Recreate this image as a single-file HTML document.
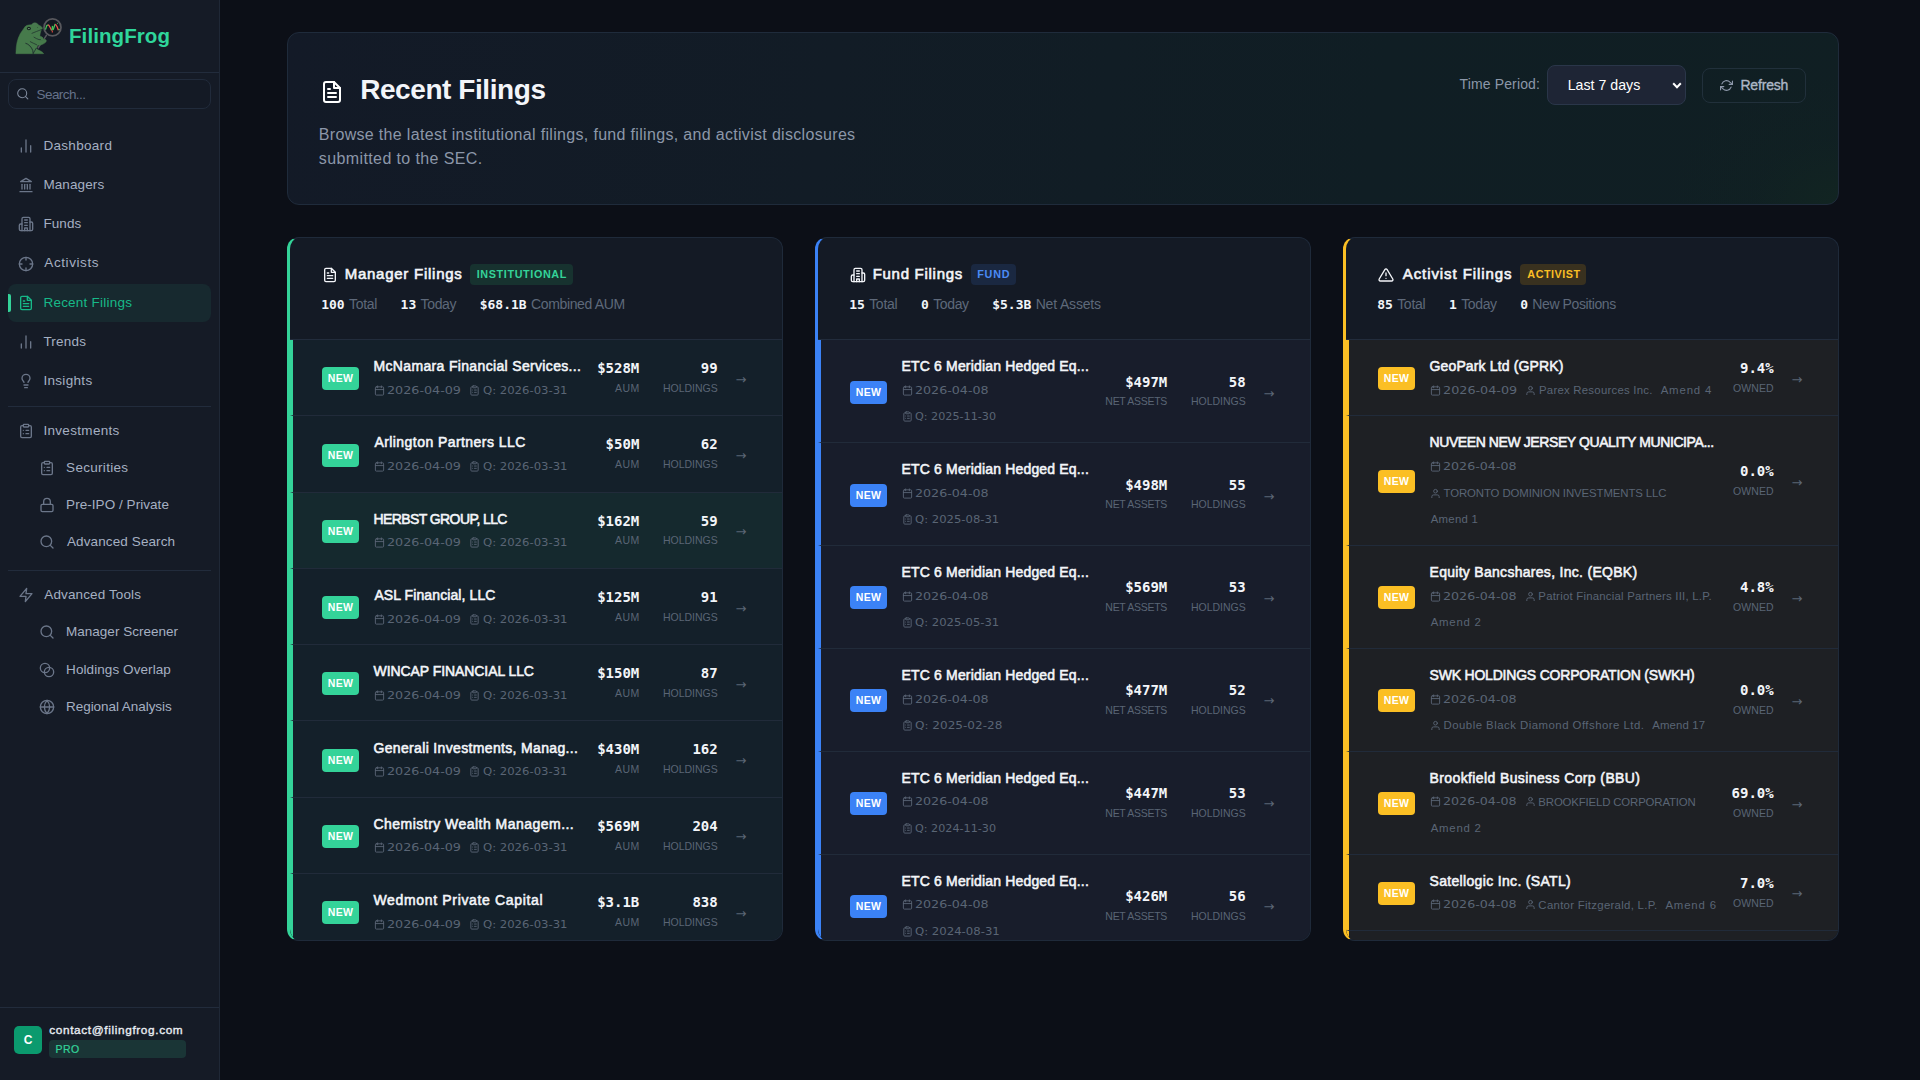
<!DOCTYPE html>
<html lang="en">
<head>
<meta charset="utf-8">
<title>Recent Filings - FilingFrog</title>
<style>
*{box-sizing:border-box;margin:0;padding:0}
html,body{width:1920px;height:1080px;overflow:hidden}
body{background:#0c0f17;color:#e5e9f0;font-family:"Liberation Sans",sans-serif;font-size:14px;position:relative}
svg{display:block;flex:none}
a{text-decoration:none;color:inherit}
i{font-style:normal}
span{white-space:nowrap}

/* ---------- sidebar ---------- */
.sb{position:absolute;left:0;top:0;width:220px;height:1080px;background:#151b26;border-right:1px solid #1f2836}
.logo{position:absolute;left:0;top:0;width:219px;height:73px;border-bottom:1px solid #222c3c}
.frog{position:absolute;left:12px;top:14px}
.brand{position:absolute;left:69px;top:24px;font-weight:700;font-size:20.5px;line-height:24px;color:#2fd69b}
.srch{position:absolute;left:8px;top:79px;width:203px;height:30px;border:1px solid #212b3b;border-radius:8px;background:#141a25;color:#66728a;display:flex;align-items:center;font-size:13.5px}
.srch svg{margin-left:6.9px;margin-right:7.2px;color:#7f8a9c}
.ni{position:absolute;left:8px;width:203px;height:38px;display:flex;align-items:center;padding:0 0 1.6px 9px;border-radius:8px;color:#a5b0c2;font-size:13.5px}
.ni i{width:18px;height:18px;display:flex;align-items:center;justify-content:center;color:#6b7689;margin-right:8.4px;position:relative;top:.8px}
.ni.act{background:#17292f;color:#17b988}
.ni.act i{color:#17b988}
.ni.act:before{content:"";position:absolute;left:0;top:9.8px;width:3px;height:18.4px;border-radius:0 2px 2px 0;background:#34d399}
.dv{position:absolute;left:8px;width:203px;height:1px;background:#222c3c}
.ni.grp,.ni.sub{height:36px}
.ni.sub{padding-left:30px}
.ni.sub i{margin-right:10.1px}
.usr{position:absolute;left:0;top:1007px;width:219px;height:73px;border-top:1px solid #222c3c}
.av{position:absolute;left:14px;top:18px;width:28px;height:28px;border-radius:5px;background:#0b9a6e;color:#fff;font-weight:700;font-size:12px;line-height:28px;text-align:center}
.em{position:absolute;left:49.3px;top:14.2px;font-size:11.8px;line-height:16px;color:#e9edf3;-webkit-text-stroke:.35px #e9edf3}
.pro{position:absolute;left:49px;top:32px;width:137px;height:18px;border-radius:4px;background:#1a3536;color:#34d399;font-size:10.5px;line-height:18px;padding-left:6.5px;-webkit-text-stroke:.2px #34d399}

/* ---------- main ---------- */
.mn{position:absolute;left:287px;top:32px;width:1552px}
.hero{position:relative;height:173px;border:1px solid #1f2b3b;border-radius:12px;background:radial-gradient(ellipse 170px 130px at 100% 100%,rgba(20,44,32,.42) 0%,rgba(18,38,33,.16) 50%,rgba(16,32,34,0) 100%),linear-gradient(100deg,#131a27 0%,#121c26 35%,#101e24 70%,#101f23 100%)}
h1{position:absolute;left:33.2px;top:41px;height:32px;display:flex;align-items:flex-start;font-size:28px;line-height:32px;font-weight:700;color:#f3f5f9}
h1 svg{margin:6px 16.2px 0 -1.2px;color:#fff}
.hero p{position:absolute;left:30.8px;top:90.4px;font-size:16px;line-height:24px;color:#8c97a9}
.tp{position:absolute;left:1171.6px;top:41px;font-size:14px;line-height:20px;color:#8c97a9}
.sel{position:absolute;left:1259px;top:32px;width:139px;height:40px;border:1px solid #2a3649;border-radius:8px;background:#1e2535;color:#fff;font-size:14.2px;line-height:38px;padding-left:19.7px}
.sel span{position:relative;top:-.2px}
.sel svg{position:absolute;left:124.2px;top:15.6px}
.btn{position:absolute;left:1414px;top:35px;width:104px;height:34.5px;border:1px solid #21303b;border-radius:8px;color:#adb8c8;font-size:14px;font-weight:400;-webkit-text-stroke:.35px #adb8c8;display:flex;align-items:center;padding:0 0 0 16.8px}
.btn svg{margin-right:7.6px;color:#8c97a9;width:13px;height:13px}

.cols{margin-top:32px;display:flex;gap:32px}
.card{width:496px;height:704px;border-radius:12px;border:1px solid #1f2a3a;border-left:3px solid #34d399;background:#141a25;overflow:hidden;position:relative}
.c-f{border-left-color:#3b82f6}
.c-a{border-left-color:#fbbf24}
.ch{height:102px;border-bottom:1px solid #222c3c;position:relative}
.ct{position:absolute;left:32px;top:25.8px;height:20px;display:flex;align-items:center;color:#f3f5f9}
.ct i{width:16px;height:16px;margin-right:6.65px;position:relative;top:1px;display:flex;align-items:center;justify-content:center}
h2{font-size:15px;line-height:20px;font-weight:400;color:#f3f5f9;-webkit-text-stroke:.6px #f3f5f9}
.tag{margin-left:8.6px;height:21px;line-height:21px;padding:0 6.3px;border-radius:4px;font-size:10.8px;font-weight:700;background:#17322f;color:#34d399;position:relative;top:1.1px}
.c-f .tag{background:#1a2841;color:#4b8bf5}
.c-a .tag{background:#39311f;color:#fbbf24}
.st{position:absolute;left:0;top:56.15px;height:20px;font-size:14px;line-height:20px;color:#5e697a}
.st>span{position:absolute;top:0}
.st b{font-family:"DejaVu Sans Mono",monospace;font-size:13px;color:#f3f5f9;font-weight:700;margin-right:4.3px}
.rw{border-left:3px solid #34d399;border-bottom:1px solid #212b3a;padding:16.7px 0 16.76px 29px;position:relative;background:#14202a;display:flex;align-items:center}
.c-f .rw{border-left-color:#3b82f6;background:#181d2b}
.c-a .rw{border-left-color:#fbbf24;background:#1e2024}
.c-m .rw.hov{background:#15292e}
.nw{width:37px;height:23px;border-radius:4px;background:#34d399;color:#fff;font-size:10.5px;font-weight:700;line-height:23px;text-align:center;flex:none;letter-spacing:.35px;position:relative;top:1.2px}
.c-f .nw{background:#3b82f6}
.c-a .nw{background:#fbbf24}
.inf{margin-left:14.5px;flex:1;min-width:0}
.nm{font-size:14px;line-height:20px;font-weight:400;color:#f3f5f9;white-space:nowrap;position:relative;top:-.6px;-webkit-text-stroke:.55px #f3f5f9}
.mt{margin:5.2px 0 0 .4px;height:16.67px;display:flex;font-size:11.4px;line-height:16.67px;color:#5a6575;white-space:nowrap}
.mt.m2{margin-top:10px}
.mt>span{display:flex;align-items:center;margin-right:7.3px}
.mt svg{margin-right:2.6px}
.v{position:absolute;text-align:right;top:50%;transform:translateY(-50%);margin-top:-1px}
.v b{display:block;font:700 14px/18px "DejaVu Sans Mono",monospace;color:#f3f5f9;position:relative;top:.45px}
.v i{display:block;font-size:10.5px;line-height:14px;color:#5a6575;margin-top:4.2px}
.v1{right:142.7px}
.v2{right:64.3px}
.ar{position:absolute;right:35.6px;top:50%;transform:translateY(-50%);color:#5a6575;font-size:13px;line-height:14px;margin-top:2.1px;font-family:"DejaVu Sans",sans-serif}
h2 span{margin-left:0}
.c-a h2{padding-left:1.2px}
.c-f .tall .nw{top:1.9px}
.c-f .tall .v{margin-top:0}
.c-f .tall .ar{margin-top:2.7px}
.mt .d{font-family:"DejaVu Sans",sans-serif;font-size:11px;position:relative;top:.85px;display:block;transform-origin:0 50%}
.c-f .v i{margin-top:3.4px}
.c-f .t2 .nw{top:.9px}
.c-f .t2 .v{margin-top:-1.5px}
.c-f .t2 .v i{margin-top:4.4px}
.c-f .t2 .ar{margin-top:1.7px}
.c-a .nw{top:.9px}
</style>
</head>
<body>
<aside class="sb">
<div class="logo"><svg class="frog" width="52" height="44" viewBox="0 0 52 44"><line x1="34.4" y1="21.4" x2="26.2" y2="33.9" stroke="#55565b" stroke-width="1.5" stroke-linecap="round"/><path d="M3.9 39.7L4 37.5L4.3 33L5 28.5L6.3 24L8.2 19.8L10.6 16.2L13 12.8Q13.7 11.9 14.7 11.5L16.5 11L19.4 10.8Q19.8 10.2 20.4 9.8Q21.5 8.9 22.8 8.8Q24.3 8.9 25.4 9.7Q26 10.2 26.4 11L28 11.8Q29 12.2 29.6 12.9Q30.5 13.6 30.4 14.3Q30.3 15 29.9 15.4L29.2 16L28.7 17.5L28.2 19.5L27.9 21.5L28.3 22.2L29.6 22.8Q30.3 23.1 30.6 23.6L31 24.5L31.5 25.4L33.4 25.5Q34.3 25.8 34.3 26.7Q34.2 27.7 33.6 28.3Q32.7 29.2 31.5 29.8Q30 30.5 28.5 31L25.5 31.3L25.3 32.6L24.3 34.4L25.5 35.5L28 36.8Q29.5 37.5 30.5 38.3Q31.3 38.9 31.6 39.7Z" fill="#467a4b" stroke="#467a4b" stroke-width=".5" stroke-linejoin="round"/><path d="M13.8 29.3C16.6 30 19.6 33 20.8 36.7L21.2 39.8" fill="none" stroke="#18222a" stroke-width=".8" stroke-linecap="round"/><path d="M21.5 38.9L24.2 34.3" fill="none" stroke="#18222a" stroke-width=".7" stroke-linecap="round"/><path d="M18.3 27.7L21.5 29.3L24.6 30.7" fill="none" stroke="#1b2a2b" stroke-width=".7" stroke-linecap="round"/><path d="M22 23.2L24.5 24.6L27 25.6L30.5 25.6" fill="none" stroke="#1b2a2b" stroke-width=".7" stroke-linecap="round"/><path d="M29.7 15.5L24.4 17.5L20 19.3" fill="none" stroke="#1d2d2c" stroke-width=".7" stroke-linecap="round"/><ellipse cx="22.8" cy="10" rx="1.9" ry=".8" fill="#4f7458"/><ellipse cx="16.9" cy="14.5" rx="2" ry="1.8" fill="#15201f"/><ellipse cx="16.9" cy="14.6" rx="1" ry=".62" fill="#6f9a74"/><circle cx="25.6" cy="13.4" r=".45" fill="#23382d"/><circle cx="40.5" cy="13.4" r="8.5" fill="#121820" stroke="#58585d" stroke-width="1.7"/><polyline points="33.5,15.6 34.6,11.9 35.8,10.8" fill="none" stroke="#45c458" stroke-width="1.3"/><polyline points="35.8,10.8 36.8,11.2 38.3,13.8 39.6,16.4" fill="none" stroke="#e8554e" stroke-width="1.3"/><polyline points="39.6,16.4 40.2,15.2 40.5,11.9" fill="none" stroke="#45c458" stroke-width="1.3"/><polyline points="40.3,16.6 40.3,18.4" fill="none" stroke="#e8453f" stroke-width="1.1"/><polyline points="41,16 42.4,12.2 43.2,9.9" fill="none" stroke="#45c458" stroke-width="1.3"/><circle cx="45.4" cy="9.3" r=".55" fill="#45c458"/><polyline points="43.4,10.2 45.2,13 46.4,16.3" fill="none" stroke="#e8554e" stroke-width="1.3"/><polyline points="46.6,16.2 47.6,15" fill="none" stroke="#45c458" stroke-width="1.1"/><path d="M29.4 22.7Q30.4 23.1 30.7 23.8L31.1 24.7L31.6 25.5L33 25.5L31.6 26.6L28.6 26.2Z" fill="#467a4b"/></svg><div class="brand"><span style="letter-spacing:0.09px;margin-right:-0.09px">FilingFrog</span></div></div>
<div class="srch"><svg width="13.5" height="13.5" viewBox="0 0 24 24" fill="none" stroke="currentColor" stroke-width="1.9" stroke-linecap="round" stroke-linejoin="round"><circle cx="11" cy="11" r="8"/><line x1="21" y1="21" x2="16.65" y2="16.65"/></svg><span style="letter-spacing:-0.58px;margin-right:0.58px">Search...</span></div>
<nav class="nav">
<a class="ni" style="top:127px"><i><svg width="16" height="16" viewBox="0 0 24 24" fill="none" stroke="currentColor" stroke-width="2" stroke-linecap="round" stroke-linejoin="round"><line x1="19" y1="21" x2="19" y2="11.5"/><line x1="12" y1="21" x2="12" y2="3"/><line x1="5" y1="21" x2="5" y2="15"/></svg></i><span style="letter-spacing:0.31px;margin-right:-0.31px">Dashboard</span></a>
<a class="ni" style="top:166.2px"><i><svg width="16" height="16" viewBox="0 0 24 24" fill="none" stroke="currentColor" stroke-width="2" stroke-linecap="round" stroke-linejoin="round"><line x1="3" y1="22" x2="21" y2="22"/><line x1="6" y1="18" x2="6" y2="11"/><line x1="10" y1="18" x2="10" y2="11"/><line x1="14" y1="18" x2="14" y2="11"/><line x1="18" y1="18" x2="18" y2="11"/><polygon points="12 2 20 7 4 7"/></svg></i><span style="letter-spacing:0.11px;margin-right:-0.11px">Managers</span></a>
<a class="ni" style="top:205.4px"><i><svg width="16" height="16" viewBox="0 0 24 24" fill="none" stroke="currentColor" stroke-width="2" stroke-linecap="round" stroke-linejoin="round"><path d="M6 22V4a2 2 0 0 1 2-2h8a2 2 0 0 1 2 2v18Z"/><path d="M6 12H4a2 2 0 0 0-2 2v6a2 2 0 0 0 2 2h2"/><path d="M18 9h2a2 2 0 0 1 2 2v9a2 2 0 0 1-2 2h-2"/><path d="M10 6h4"/><path d="M10 10h4"/><path d="M10 14h4"/><path d="M10 22v-4h4v4"/></svg></i><span style="letter-spacing:0.09px;margin-right:-0.09px">Funds</span></a>
<a class="ni" style="top:244.6px"><i><svg width="16" height="16" viewBox="0 0 24 24" fill="none" stroke="currentColor" stroke-width="2" stroke-linecap="round" stroke-linejoin="round"><circle cx="12" cy="12" r="10"/><line x1="22" y1="12" x2="18" y2="12"/><line x1="6" y1="12" x2="2" y2="12"/><line x1="12" y1="6" x2="12" y2="2"/><line x1="12" y1="22" x2="12" y2="18"/></svg></i><span style="margin-left:.9px;letter-spacing:0.59px;margin-right:-0.59px">Activists</span></a>
<a class="ni act" style="top:283.8px"><i><svg width="16" height="16" viewBox="0 0 24 24" fill="none" stroke="currentColor" stroke-width="2" stroke-linecap="round" stroke-linejoin="round"><path d="M14 2H6a2 2 0 0 0-2 2v16a2 2 0 0 0 2 2h12a2 2 0 0 0 2-2V8z"/><polyline points="14 2 14 8 20 8"/><line x1="16" y1="13" x2="8" y2="13"/><line x1="16" y1="17" x2="8" y2="17"/><polyline points="10 9 9 9 8 9"/></svg></i><span style="letter-spacing:0.24px;margin-right:-0.24px">Recent Filings</span></a>
<a class="ni" style="top:323px"><i><svg width="16" height="16" viewBox="0 0 24 24" fill="none" stroke="currentColor" stroke-width="2" stroke-linecap="round" stroke-linejoin="round"><line x1="19" y1="21" x2="19" y2="11.5"/><line x1="12" y1="21" x2="12" y2="3"/><line x1="5" y1="21" x2="5" y2="15"/></svg></i><span style="letter-spacing:0.22px;margin-right:-0.22px">Trends</span></a>
<a class="ni" style="top:362.2px"><i><svg width="16" height="16" viewBox="0 0 24 24" fill="none" stroke="currentColor" stroke-width="2" stroke-linecap="round" stroke-linejoin="round"><path d="M15 14c.2-1 .7-1.7 1.5-2.5 1-.9 1.5-2.2 1.5-3.5A6 6 0 0 0 6 8c0 1 .2 2.2 1.5 3.5.7.7 1.3 1.5 1.5 2.5"/><path d="M9 18h6"/><path d="M10 22h4"/></svg></i><span style="letter-spacing:0.32px;margin-right:-0.32px">Insights</span></a>
<div class="dv" style="top:406px"></div>
<a class="ni grp" style="top:413px"><i><svg width="16" height="16" viewBox="0 0 24 24" fill="none" stroke="currentColor" stroke-width="2" stroke-linecap="round" stroke-linejoin="round"><rect x="8" y="2" width="8" height="4" rx="1" ry="1"/><path d="M16 4h2a2 2 0 0 1 2 2v14a2 2 0 0 1-2 2H6a2 2 0 0 1-2-2V6a2 2 0 0 1 2-2h2"/><path d="M12 11h4"/><path d="M12 16h4"/><path d="M8 11h.01"/><path d="M8 16h.01"/></svg></i><span style="letter-spacing:0.32px;margin-right:-0.32px">Investments</span></a>
<a class="ni sub" style="top:450.1px"><i><svg width="16" height="16" viewBox="0 0 24 24" fill="none" stroke="currentColor" stroke-width="2" stroke-linecap="round" stroke-linejoin="round"><rect x="8" y="2" width="8" height="4" rx="1" ry="1"/><path d="M16 4h2a2 2 0 0 1 2 2v14a2 2 0 0 1-2 2H6a2 2 0 0 1-2-2V6a2 2 0 0 1 2-2h2"/><path d="M12 11h4"/><path d="M12 16h4"/><path d="M8 11h.01"/><path d="M8 16h.01"/></svg></i><span style="letter-spacing:0.30px;margin-right:-0.30px">Securities</span></a>
<a class="ni sub" style="top:487.1px"><i><svg width="16" height="16" viewBox="0 0 24 24" fill="none" stroke="currentColor" stroke-width="2" stroke-linecap="round" stroke-linejoin="round"><rect x="3" y="11" width="18" height="11" rx="2" ry="2"/><path d="M7 11V7a5 5 0 0 1 10 0v4"/></svg></i><span style="letter-spacing:0.05px;margin-right:-0.05px">Pre-IPO / Private</span></a>
<a class="ni sub" style="top:524.1px"><i><svg width="16" height="16" viewBox="0 0 24 24" fill="none" stroke="currentColor" stroke-width="2" stroke-linecap="round" stroke-linejoin="round"><circle cx="11" cy="11" r="8"/><line x1="21" y1="21" x2="16.65" y2="16.65"/></svg></i><span style="margin-left:.9px;letter-spacing:0.11px;margin-right:-0.11px">Advanced Search</span></a>
<div class="dv" style="top:570px"></div>
<a class="ni grp" style="top:577.1px"><i><svg width="16" height="16" viewBox="0 0 24 24" fill="none" stroke="currentColor" stroke-width="2" stroke-linecap="round" stroke-linejoin="round"><polygon points="13 2 3 14 12 14 11 22 21 10 12 10 13 2"/></svg></i><span style="margin-left:.9px;letter-spacing:0.12px;margin-right:-0.12px">Advanced Tools</span></a>
<a class="ni sub" style="top:614px"><i><svg width="16" height="16" viewBox="0 0 24 24" fill="none" stroke="currentColor" stroke-width="2" stroke-linecap="round" stroke-linejoin="round"><circle cx="11" cy="11" r="8"/><line x1="21" y1="21" x2="16.65" y2="16.65"/></svg></i><span>Manager Screener</span></a>
<a class="ni sub" style="top:652px"><i><svg width="16" height="16" viewBox="0 0 24 24" fill="none" stroke="currentColor" stroke-width="2" stroke-linecap="round" stroke-linejoin="round"><circle cx="9" cy="9" r="7"/><circle cx="15" cy="15" r="7"/></svg></i><span style="letter-spacing:0.08px;margin-right:-0.08px">Holdings Overlap</span></a>
<a class="ni sub" style="top:689.3px"><i><svg width="16" height="16" viewBox="0 0 24 24" fill="none" stroke="currentColor" stroke-width="2" stroke-linecap="round" stroke-linejoin="round"><circle cx="12" cy="12" r="10"/><line x1="2" y1="12" x2="22" y2="12"/><path d="M12 2a15.3 15.3 0 0 1 4 10 15.3 15.3 0 0 1-4 10 15.3 15.3 0 0 1-4-10 15.3 15.3 0 0 1 4-10z"/></svg></i><span style="letter-spacing:-0.06px;margin-right:0.06px">Regional Analysis</span></a>
</nav>
<div class="usr"><div class="av">C</div><div class="em"><span style="letter-spacing:0.63px;margin-right:-0.63px">contact@filingfrog.com</span></div><div class="pro"><span style="letter-spacing:0.49px;margin-right:-0.49px">PRO</span></div></div>
</aside>
<main class="mn">
<section class="hero">
<h1><svg width="24" height="24" viewBox="0 0 24 24" fill="none" stroke="currentColor" stroke-width="2" stroke-linecap="round" stroke-linejoin="round"><path d="M14 2H6a2 2 0 0 0-2 2v16a2 2 0 0 0 2 2h12a2 2 0 0 0 2-2V8z"/><polyline points="14 2 14 8 20 8"/><line x1="16" y1="13" x2="8" y2="13"/><line x1="16" y1="17" x2="8" y2="17"/><polyline points="10 9 9 9 8 9"/></svg><span style="letter-spacing:-0.43px;margin-right:0.43px">Recent Filings</span></h1>
<p><span style="letter-spacing:0.32px;margin-right:-0.32px">Browse the latest institutional filings, fund filings, and activist disclosures</span><br><span style="letter-spacing:0.39px;margin-right:-0.39px">submitted to the SEC.</span></p>
<label class="tp"><span style="letter-spacing:0.13px;margin-right:-0.13px">Time Period:</span></label>
<div class="sel"><span>Last 7 days</span><svg width="10" height="7" viewBox="0 0 10 7" fill="none" stroke="#fff" stroke-width="2"><polyline points="1.2 1.3 5 5.3 8.8 1.3"/></svg></div>
<div class="btn"><svg width="13" height="13" viewBox="0 0 24 24" fill="none" stroke="currentColor" stroke-width="2.1" stroke-linecap="round" stroke-linejoin="round"><polyline points="23 4 23 10 17 10"/><polyline points="1 20 1 14 7 14"/><path d="M3.51 9a9 9 0 0 1 14.85-3.36L23 10M1 14l4.64 4.36A9 9 0 0 0 20.49 15"/></svg><span style="letter-spacing:-0.17px;margin-right:0.17px">Refresh</span></div>
</section>
<div class="cols">
<section class="card c-m">
<header class="ch">
<div class="ct"><i><svg width="16" height="16" viewBox="0 0 24 24" fill="none" stroke="currentColor" stroke-width="2" stroke-linecap="round" stroke-linejoin="round"><path d="M14 2H6a2 2 0 0 0-2 2v16a2 2 0 0 0 2 2h12a2 2 0 0 0 2-2V8z"/><polyline points="14 2 14 8 20 8"/><line x1="16" y1="13" x2="8" y2="13"/><line x1="16" y1="17" x2="8" y2="17"/><polyline points="10 9 9 9 8 9"/></svg></i><h2><span style="letter-spacing:0.75px;margin-right:-0.75px">Manager Filings</span></h2><span class="tag"><span style="letter-spacing:0.62px;margin-right:-0.62px">INSTITUTIONAL</span></span></div>
<div class="st"><span style="left:31.2px"><b>100</b><span style="letter-spacing:-0.27px;margin-right:0.27px">Total</span></span><span style="left:110.6px"><b>13</b><span style="letter-spacing:-0.34px;margin-right:0.34px">Today</span></span><span style="left:189.7px"><b>$68.1B</b><span style="letter-spacing:-0.35px;margin-right:0.35px">Combined AUM</span></span></div>
</header>
<div class="ls">
<div class="rw"><span class="nw">NEW</span><div class="inf"><div class="nm"><span style="letter-spacing:0.34px;margin-right:-0.34px">McNamara Financial Services...</span></div><div class="mt"><span><svg width="11" height="11" viewBox="0 0 24 24" fill="none" stroke="currentColor" stroke-width="2" stroke-linecap="round" stroke-linejoin="round"><rect x="3" y="4" width="18" height="18" rx="2" ry="2"/><line x1="16" y1="2" x2="16" y2="6"/><line x1="8" y1="2" x2="8" y2="6"/><line x1="3" y1="10" x2="21" y2="10"/></svg><span class="d" style="transform:scaleX(1.157);margin-right:10.46px">2026-04-09</span></span><span><svg width="11" height="11" viewBox="0 0 24 24" fill="none" stroke="currentColor" stroke-width="2" stroke-linecap="round" stroke-linejoin="round"><rect x="8" y="2" width="8" height="4" rx="1" ry="1"/><path d="M16 4h2a2 2 0 0 1 2 2v14a2 2 0 0 1-2 2H6a2 2 0 0 1-2-2V6a2 2 0 0 1 2-2h2"/><path d="M12 11h4"/><path d="M12 16h4"/><path d="M8 11h.01"/><path d="M8 16h.01"/></svg><span class="d" style="transform:scaleX(1.059);margin-right:5.10px">Q: 2026-03-31</span></span></div></div><div class="v v1"><b>$528M</b><i><span style="margin-left:.9px;letter-spacing:0.53px;margin-right:-0.53px">AUM</span></i></div><div class="v v2"><b>99</b><i><span style="letter-spacing:-0.01px;margin-right:0.01px">HOLDINGS</span></i></div><span class="ar">&rarr;</span></div>
<div class="rw"><span class="nw">NEW</span><div class="inf"><div class="nm"><span style="margin-left:.9px;letter-spacing:0.44px;margin-right:-0.44px">Arlington Partners LLC</span></div><div class="mt"><span><svg width="11" height="11" viewBox="0 0 24 24" fill="none" stroke="currentColor" stroke-width="2" stroke-linecap="round" stroke-linejoin="round"><rect x="3" y="4" width="18" height="18" rx="2" ry="2"/><line x1="16" y1="2" x2="16" y2="6"/><line x1="8" y1="2" x2="8" y2="6"/><line x1="3" y1="10" x2="21" y2="10"/></svg><span class="d" style="transform:scaleX(1.157);margin-right:10.46px">2026-04-09</span></span><span><svg width="11" height="11" viewBox="0 0 24 24" fill="none" stroke="currentColor" stroke-width="2" stroke-linecap="round" stroke-linejoin="round"><rect x="8" y="2" width="8" height="4" rx="1" ry="1"/><path d="M16 4h2a2 2 0 0 1 2 2v14a2 2 0 0 1-2 2H6a2 2 0 0 1-2-2V6a2 2 0 0 1 2-2h2"/><path d="M12 11h4"/><path d="M12 16h4"/><path d="M8 11h.01"/><path d="M8 16h.01"/></svg><span class="d" style="transform:scaleX(1.059);margin-right:5.10px">Q: 2026-03-31</span></span></div></div><div class="v v1"><b>$50M</b><i><span style="margin-left:.9px;letter-spacing:0.53px;margin-right:-0.53px">AUM</span></i></div><div class="v v2"><b>62</b><i><span style="letter-spacing:-0.01px;margin-right:0.01px">HOLDINGS</span></i></div><span class="ar">&rarr;</span></div>
<div class="rw hov"><span class="nw">NEW</span><div class="inf"><div class="nm"><span style="letter-spacing:-0.59px;margin-right:0.59px">HERBST GROUP, LLC</span></div><div class="mt"><span><svg width="11" height="11" viewBox="0 0 24 24" fill="none" stroke="currentColor" stroke-width="2" stroke-linecap="round" stroke-linejoin="round"><rect x="3" y="4" width="18" height="18" rx="2" ry="2"/><line x1="16" y1="2" x2="16" y2="6"/><line x1="8" y1="2" x2="8" y2="6"/><line x1="3" y1="10" x2="21" y2="10"/></svg><span class="d" style="transform:scaleX(1.157);margin-right:10.46px">2026-04-09</span></span><span><svg width="11" height="11" viewBox="0 0 24 24" fill="none" stroke="currentColor" stroke-width="2" stroke-linecap="round" stroke-linejoin="round"><rect x="8" y="2" width="8" height="4" rx="1" ry="1"/><path d="M16 4h2a2 2 0 0 1 2 2v14a2 2 0 0 1-2 2H6a2 2 0 0 1-2-2V6a2 2 0 0 1 2-2h2"/><path d="M12 11h4"/><path d="M12 16h4"/><path d="M8 11h.01"/><path d="M8 16h.01"/></svg><span class="d" style="transform:scaleX(1.059);margin-right:5.10px">Q: 2026-03-31</span></span></div></div><div class="v v1"><b>$162M</b><i><span style="margin-left:.9px;letter-spacing:0.53px;margin-right:-0.53px">AUM</span></i></div><div class="v v2"><b>59</b><i><span style="letter-spacing:-0.01px;margin-right:0.01px">HOLDINGS</span></i></div><span class="ar">&rarr;</span></div>
<div class="rw"><span class="nw">NEW</span><div class="inf"><div class="nm"><span style="margin-left:.9px;letter-spacing:0.10px;margin-right:-0.10px">ASL Financial, LLC</span></div><div class="mt"><span><svg width="11" height="11" viewBox="0 0 24 24" fill="none" stroke="currentColor" stroke-width="2" stroke-linecap="round" stroke-linejoin="round"><rect x="3" y="4" width="18" height="18" rx="2" ry="2"/><line x1="16" y1="2" x2="16" y2="6"/><line x1="8" y1="2" x2="8" y2="6"/><line x1="3" y1="10" x2="21" y2="10"/></svg><span class="d" style="transform:scaleX(1.157);margin-right:10.46px">2026-04-09</span></span><span><svg width="11" height="11" viewBox="0 0 24 24" fill="none" stroke="currentColor" stroke-width="2" stroke-linecap="round" stroke-linejoin="round"><rect x="8" y="2" width="8" height="4" rx="1" ry="1"/><path d="M16 4h2a2 2 0 0 1 2 2v14a2 2 0 0 1-2 2H6a2 2 0 0 1-2-2V6a2 2 0 0 1 2-2h2"/><path d="M12 11h4"/><path d="M12 16h4"/><path d="M8 11h.01"/><path d="M8 16h.01"/></svg><span class="d" style="transform:scaleX(1.059);margin-right:5.10px">Q: 2026-03-31</span></span></div></div><div class="v v1"><b>$125M</b><i><span style="margin-left:.9px;letter-spacing:0.53px;margin-right:-0.53px">AUM</span></i></div><div class="v v2"><b>91</b><i><span style="letter-spacing:-0.01px;margin-right:0.01px">HOLDINGS</span></i></div><span class="ar">&rarr;</span></div>
<div class="rw"><span class="nw">NEW</span><div class="inf"><div class="nm"><span style="letter-spacing:-0.07px;margin-right:0.07px">WINCAP FINANCIAL LLC</span></div><div class="mt"><span><svg width="11" height="11" viewBox="0 0 24 24" fill="none" stroke="currentColor" stroke-width="2" stroke-linecap="round" stroke-linejoin="round"><rect x="3" y="4" width="18" height="18" rx="2" ry="2"/><line x1="16" y1="2" x2="16" y2="6"/><line x1="8" y1="2" x2="8" y2="6"/><line x1="3" y1="10" x2="21" y2="10"/></svg><span class="d" style="transform:scaleX(1.157);margin-right:10.46px">2026-04-09</span></span><span><svg width="11" height="11" viewBox="0 0 24 24" fill="none" stroke="currentColor" stroke-width="2" stroke-linecap="round" stroke-linejoin="round"><rect x="8" y="2" width="8" height="4" rx="1" ry="1"/><path d="M16 4h2a2 2 0 0 1 2 2v14a2 2 0 0 1-2 2H6a2 2 0 0 1-2-2V6a2 2 0 0 1 2-2h2"/><path d="M12 11h4"/><path d="M12 16h4"/><path d="M8 11h.01"/><path d="M8 16h.01"/></svg><span class="d" style="transform:scaleX(1.059);margin-right:5.10px">Q: 2026-03-31</span></span></div></div><div class="v v1"><b>$150M</b><i><span style="margin-left:.9px;letter-spacing:0.53px;margin-right:-0.53px">AUM</span></i></div><div class="v v2"><b>87</b><i><span style="letter-spacing:-0.01px;margin-right:0.01px">HOLDINGS</span></i></div><span class="ar">&rarr;</span></div>
<div class="rw"><span class="nw">NEW</span><div class="inf"><div class="nm"><span style="letter-spacing:0.34px;margin-right:-0.34px">Generali Investments, Manag...</span></div><div class="mt"><span><svg width="11" height="11" viewBox="0 0 24 24" fill="none" stroke="currentColor" stroke-width="2" stroke-linecap="round" stroke-linejoin="round"><rect x="3" y="4" width="18" height="18" rx="2" ry="2"/><line x1="16" y1="2" x2="16" y2="6"/><line x1="8" y1="2" x2="8" y2="6"/><line x1="3" y1="10" x2="21" y2="10"/></svg><span class="d" style="transform:scaleX(1.157);margin-right:10.46px">2026-04-09</span></span><span><svg width="11" height="11" viewBox="0 0 24 24" fill="none" stroke="currentColor" stroke-width="2" stroke-linecap="round" stroke-linejoin="round"><rect x="8" y="2" width="8" height="4" rx="1" ry="1"/><path d="M16 4h2a2 2 0 0 1 2 2v14a2 2 0 0 1-2 2H6a2 2 0 0 1-2-2V6a2 2 0 0 1 2-2h2"/><path d="M12 11h4"/><path d="M12 16h4"/><path d="M8 11h.01"/><path d="M8 16h.01"/></svg><span class="d" style="transform:scaleX(1.059);margin-right:5.10px">Q: 2026-03-31</span></span></div></div><div class="v v1"><b>$430M</b><i><span style="margin-left:.9px;letter-spacing:0.53px;margin-right:-0.53px">AUM</span></i></div><div class="v v2"><b>162</b><i><span style="letter-spacing:-0.01px;margin-right:0.01px">HOLDINGS</span></i></div><span class="ar">&rarr;</span></div>
<div class="rw"><span class="nw">NEW</span><div class="inf"><div class="nm"><span style="letter-spacing:0.47px;margin-right:-0.47px">Chemistry Wealth Managem...</span></div><div class="mt"><span><svg width="11" height="11" viewBox="0 0 24 24" fill="none" stroke="currentColor" stroke-width="2" stroke-linecap="round" stroke-linejoin="round"><rect x="3" y="4" width="18" height="18" rx="2" ry="2"/><line x1="16" y1="2" x2="16" y2="6"/><line x1="8" y1="2" x2="8" y2="6"/><line x1="3" y1="10" x2="21" y2="10"/></svg><span class="d" style="transform:scaleX(1.157);margin-right:10.46px">2026-04-09</span></span><span><svg width="11" height="11" viewBox="0 0 24 24" fill="none" stroke="currentColor" stroke-width="2" stroke-linecap="round" stroke-linejoin="round"><rect x="8" y="2" width="8" height="4" rx="1" ry="1"/><path d="M16 4h2a2 2 0 0 1 2 2v14a2 2 0 0 1-2 2H6a2 2 0 0 1-2-2V6a2 2 0 0 1 2-2h2"/><path d="M12 11h4"/><path d="M12 16h4"/><path d="M8 11h.01"/><path d="M8 16h.01"/></svg><span class="d" style="transform:scaleX(1.059);margin-right:5.10px">Q: 2026-03-31</span></span></div></div><div class="v v1"><b>$569M</b><i><span style="margin-left:.9px;letter-spacing:0.53px;margin-right:-0.53px">AUM</span></i></div><div class="v v2"><b>204</b><i><span style="letter-spacing:-0.01px;margin-right:0.01px">HOLDINGS</span></i></div><span class="ar">&rarr;</span></div>
<div class="rw"><span class="nw">NEW</span><div class="inf"><div class="nm"><span style="letter-spacing:0.66px;margin-right:-0.66px">Wedmont Private Capital</span></div><div class="mt"><span><svg width="11" height="11" viewBox="0 0 24 24" fill="none" stroke="currentColor" stroke-width="2" stroke-linecap="round" stroke-linejoin="round"><rect x="3" y="4" width="18" height="18" rx="2" ry="2"/><line x1="16" y1="2" x2="16" y2="6"/><line x1="8" y1="2" x2="8" y2="6"/><line x1="3" y1="10" x2="21" y2="10"/></svg><span class="d" style="transform:scaleX(1.157);margin-right:10.46px">2026-04-09</span></span><span><svg width="11" height="11" viewBox="0 0 24 24" fill="none" stroke="currentColor" stroke-width="2" stroke-linecap="round" stroke-linejoin="round"><rect x="8" y="2" width="8" height="4" rx="1" ry="1"/><path d="M16 4h2a2 2 0 0 1 2 2v14a2 2 0 0 1-2 2H6a2 2 0 0 1-2-2V6a2 2 0 0 1 2-2h2"/><path d="M12 11h4"/><path d="M12 16h4"/><path d="M8 11h.01"/><path d="M8 16h.01"/></svg><span class="d" style="transform:scaleX(1.059);margin-right:5.10px">Q: 2026-03-31</span></span></div></div><div class="v v1"><b>$3.1B</b><i><span style="margin-left:.9px;letter-spacing:0.53px;margin-right:-0.53px">AUM</span></i></div><div class="v v2"><b>838</b><i><span style="letter-spacing:-0.01px;margin-right:0.01px">HOLDINGS</span></i></div><span class="ar">&rarr;</span></div>
</div>
</section>
<section class="card c-f">
<header class="ch">
<div class="ct"><i><svg width="16" height="16" viewBox="0 0 24 24" fill="none" stroke="currentColor" stroke-width="2" stroke-linecap="round" stroke-linejoin="round"><path d="M6 22V4a2 2 0 0 1 2-2h8a2 2 0 0 1 2 2v18Z"/><path d="M6 12H4a2 2 0 0 0-2 2v6a2 2 0 0 0 2 2h2"/><path d="M18 9h2a2 2 0 0 1 2 2v9a2 2 0 0 1-2 2h-2"/><path d="M10 6h4"/><path d="M10 10h4"/><path d="M10 14h4"/><path d="M10 22v-4h4v4"/></svg></i><h2><span style="letter-spacing:0.72px;margin-right:-0.72px">Fund Filings</span></h2><span class="tag"><span style="letter-spacing:0.80px;margin-right:-0.80px">FUND</span></span></div>
<div class="st"><span style="left:31.2px"><b>15</b><span style="letter-spacing:-0.27px;margin-right:0.27px">Total</span></span><span style="left:103.0px"><b>0</b><span style="letter-spacing:-0.34px;margin-right:0.34px">Today</span></span><span style="left:174.2px"><b>$5.3B</b><span style="letter-spacing:-0.16px;margin-right:0.16px">Net Assets</span></span></div>
</header>
<div class="ls">
<div class="rw tall"><span class="nw">NEW</span><div class="inf"><div class="nm"><span style="letter-spacing:0.17px;margin-right:-0.17px">ETC 6 Meridian Hedged Eq...</span></div><div class="mt"><span><svg width="11" height="11" viewBox="0 0 24 24" fill="none" stroke="currentColor" stroke-width="2" stroke-linecap="round" stroke-linejoin="round"><rect x="3" y="4" width="18" height="18" rx="2" ry="2"/><line x1="16" y1="2" x2="16" y2="6"/><line x1="8" y1="2" x2="8" y2="6"/><line x1="3" y1="10" x2="21" y2="10"/></svg><span class="d" style="transform:scaleX(1.151);margin-right:10.06px">2026-04-08</span></span></div><div class="mt m2"><span><svg width="11" height="11" viewBox="0 0 24 24" fill="none" stroke="currentColor" stroke-width="2" stroke-linecap="round" stroke-linejoin="round"><rect x="8" y="2" width="8" height="4" rx="1" ry="1"/><path d="M16 4h2a2 2 0 0 1 2 2v14a2 2 0 0 1-2 2H6a2 2 0 0 1-2-2V6a2 2 0 0 1 2-2h2"/><path d="M12 11h4"/><path d="M12 16h4"/><path d="M8 11h.01"/><path d="M8 16h.01"/></svg><span class="d" style="transform:scaleX(1.016);margin-right:1.70px">Q: 2025-11-30</span></span></div></div><div class="v v1"><b>$497M</b><i><span style="letter-spacing:-0.29px;margin-right:0.29px">NET ASSETS</span></i></div><div class="v v2"><b>58</b><i><span style="letter-spacing:-0.01px;margin-right:0.01px">HOLDINGS</span></i></div><span class="ar">&rarr;</span></div>
<div class="rw tall"><span class="nw">NEW</span><div class="inf"><div class="nm"><span style="letter-spacing:0.17px;margin-right:-0.17px">ETC 6 Meridian Hedged Eq...</span></div><div class="mt"><span><svg width="11" height="11" viewBox="0 0 24 24" fill="none" stroke="currentColor" stroke-width="2" stroke-linecap="round" stroke-linejoin="round"><rect x="3" y="4" width="18" height="18" rx="2" ry="2"/><line x1="16" y1="2" x2="16" y2="6"/><line x1="8" y1="2" x2="8" y2="6"/><line x1="3" y1="10" x2="21" y2="10"/></svg><span class="d" style="transform:scaleX(1.151);margin-right:10.06px">2026-04-08</span></span></div><div class="mt m2"><span><svg width="11" height="11" viewBox="0 0 24 24" fill="none" stroke="currentColor" stroke-width="2" stroke-linecap="round" stroke-linejoin="round"><rect x="8" y="2" width="8" height="4" rx="1" ry="1"/><path d="M16 4h2a2 2 0 0 1 2 2v14a2 2 0 0 1-2 2H6a2 2 0 0 1-2-2V6a2 2 0 0 1 2-2h2"/><path d="M12 11h4"/><path d="M12 16h4"/><path d="M8 11h.01"/><path d="M8 16h.01"/></svg><span class="d" style="transform:scaleX(1.056);margin-right:4.90px">Q: 2025-08-31</span></span></div></div><div class="v v1"><b>$498M</b><i><span style="letter-spacing:-0.29px;margin-right:0.29px">NET ASSETS</span></i></div><div class="v v2"><b>55</b><i><span style="letter-spacing:-0.01px;margin-right:0.01px">HOLDINGS</span></i></div><span class="ar">&rarr;</span></div>
<div class="rw t2"><span class="nw">NEW</span><div class="inf"><div class="nm"><span style="letter-spacing:0.17px;margin-right:-0.17px">ETC 6 Meridian Hedged Eq...</span></div><div class="mt"><span><svg width="11" height="11" viewBox="0 0 24 24" fill="none" stroke="currentColor" stroke-width="2" stroke-linecap="round" stroke-linejoin="round"><rect x="3" y="4" width="18" height="18" rx="2" ry="2"/><line x1="16" y1="2" x2="16" y2="6"/><line x1="8" y1="2" x2="8" y2="6"/><line x1="3" y1="10" x2="21" y2="10"/></svg><span class="d" style="transform:scaleX(1.151);margin-right:10.06px">2026-04-08</span></span></div><div class="mt m2"><span><svg width="11" height="11" viewBox="0 0 24 24" fill="none" stroke="currentColor" stroke-width="2" stroke-linecap="round" stroke-linejoin="round"><rect x="8" y="2" width="8" height="4" rx="1" ry="1"/><path d="M16 4h2a2 2 0 0 1 2 2v14a2 2 0 0 1-2 2H6a2 2 0 0 1-2-2V6a2 2 0 0 1 2-2h2"/><path d="M12 11h4"/><path d="M12 16h4"/><path d="M8 11h.01"/><path d="M8 16h.01"/></svg><span class="d" style="transform:scaleX(1.056);margin-right:4.90px">Q: 2025-05-31</span></span></div></div><div class="v v1"><b>$569M</b><i><span style="letter-spacing:-0.29px;margin-right:0.29px">NET ASSETS</span></i></div><div class="v v2"><b>53</b><i><span style="letter-spacing:-0.01px;margin-right:0.01px">HOLDINGS</span></i></div><span class="ar">&rarr;</span></div>
<div class="rw t2"><span class="nw">NEW</span><div class="inf"><div class="nm"><span style="letter-spacing:0.17px;margin-right:-0.17px">ETC 6 Meridian Hedged Eq...</span></div><div class="mt"><span><svg width="11" height="11" viewBox="0 0 24 24" fill="none" stroke="currentColor" stroke-width="2" stroke-linecap="round" stroke-linejoin="round"><rect x="3" y="4" width="18" height="18" rx="2" ry="2"/><line x1="16" y1="2" x2="16" y2="6"/><line x1="8" y1="2" x2="8" y2="6"/><line x1="3" y1="10" x2="21" y2="10"/></svg><span class="d" style="transform:scaleX(1.151);margin-right:10.06px">2026-04-08</span></span></div><div class="mt m2"><span><svg width="11" height="11" viewBox="0 0 24 24" fill="none" stroke="currentColor" stroke-width="2" stroke-linecap="round" stroke-linejoin="round"><rect x="8" y="2" width="8" height="4" rx="1" ry="1"/><path d="M16 4h2a2 2 0 0 1 2 2v14a2 2 0 0 1-2 2H6a2 2 0 0 1-2-2V6a2 2 0 0 1 2-2h2"/><path d="M12 11h4"/><path d="M12 16h4"/><path d="M8 11h.01"/><path d="M8 16h.01"/></svg><span class="d" style="transform:scaleX(1.094);margin-right:7.90px">Q: 2025-02-28</span></span></div></div><div class="v v1"><b>$477M</b><i><span style="letter-spacing:-0.29px;margin-right:0.29px">NET ASSETS</span></i></div><div class="v v2"><b>52</b><i><span style="letter-spacing:-0.01px;margin-right:0.01px">HOLDINGS</span></i></div><span class="ar">&rarr;</span></div>
<div class="rw t2"><span class="nw">NEW</span><div class="inf"><div class="nm"><span style="letter-spacing:0.17px;margin-right:-0.17px">ETC 6 Meridian Hedged Eq...</span></div><div class="mt"><span><svg width="11" height="11" viewBox="0 0 24 24" fill="none" stroke="currentColor" stroke-width="2" stroke-linecap="round" stroke-linejoin="round"><rect x="3" y="4" width="18" height="18" rx="2" ry="2"/><line x1="16" y1="2" x2="16" y2="6"/><line x1="8" y1="2" x2="8" y2="6"/><line x1="3" y1="10" x2="21" y2="10"/></svg><span class="d" style="transform:scaleX(1.151);margin-right:10.06px">2026-04-08</span></span></div><div class="mt m2"><span><svg width="11" height="11" viewBox="0 0 24 24" fill="none" stroke="currentColor" stroke-width="2" stroke-linecap="round" stroke-linejoin="round"><rect x="8" y="2" width="8" height="4" rx="1" ry="1"/><path d="M16 4h2a2 2 0 0 1 2 2v14a2 2 0 0 1-2 2H6a2 2 0 0 1-2-2V6a2 2 0 0 1 2-2h2"/><path d="M12 11h4"/><path d="M12 16h4"/><path d="M8 11h.01"/><path d="M8 16h.01"/></svg><span class="d" style="transform:scaleX(1.016);margin-right:1.70px">Q: 2024-11-30</span></span></div></div><div class="v v1"><b>$447M</b><i><span style="letter-spacing:-0.29px;margin-right:0.29px">NET ASSETS</span></i></div><div class="v v2"><b>53</b><i><span style="letter-spacing:-0.01px;margin-right:0.01px">HOLDINGS</span></i></div><span class="ar">&rarr;</span></div>
<div class="rw t2"><span class="nw">NEW</span><div class="inf"><div class="nm"><span style="letter-spacing:0.17px;margin-right:-0.17px">ETC 6 Meridian Hedged Eq...</span></div><div class="mt"><span><svg width="11" height="11" viewBox="0 0 24 24" fill="none" stroke="currentColor" stroke-width="2" stroke-linecap="round" stroke-linejoin="round"><rect x="3" y="4" width="18" height="18" rx="2" ry="2"/><line x1="16" y1="2" x2="16" y2="6"/><line x1="8" y1="2" x2="8" y2="6"/><line x1="3" y1="10" x2="21" y2="10"/></svg><span class="d" style="transform:scaleX(1.151);margin-right:10.06px">2026-04-08</span></span></div><div class="mt m2"><span><svg width="11" height="11" viewBox="0 0 24 24" fill="none" stroke="currentColor" stroke-width="2" stroke-linecap="round" stroke-linejoin="round"><rect x="8" y="2" width="8" height="4" rx="1" ry="1"/><path d="M16 4h2a2 2 0 0 1 2 2v14a2 2 0 0 1-2 2H6a2 2 0 0 1-2-2V6a2 2 0 0 1 2-2h2"/><path d="M12 11h4"/><path d="M12 16h4"/><path d="M8 11h.01"/><path d="M8 16h.01"/></svg><span class="d" style="transform:scaleX(1.063);margin-right:5.40px">Q: 2024-08-31</span></span></div></div><div class="v v1"><b>$426M</b><i><span style="letter-spacing:-0.29px;margin-right:0.29px">NET ASSETS</span></i></div><div class="v v2"><b>56</b><i><span style="letter-spacing:-0.01px;margin-right:0.01px">HOLDINGS</span></i></div><span class="ar">&rarr;</span></div>
</div>
</section>
<section class="card c-a">
<header class="ch">
<div class="ct"><i><svg width="16" height="16" viewBox="0 0 24 24" fill="none" stroke="currentColor" stroke-width="2" stroke-linecap="round" stroke-linejoin="round"><path d="M10.29 3.86L1.82 18a2 2 0 0 0 1.71 3h16.94a2 2 0 0 0 1.71-3L13.71 3.86a2 2 0 0 0-3.42 0z"/><line x1="12" y1="9" x2="12" y2="13"/><line x1="12" y1="17" x2="12.01" y2="17"/></svg></i><h2><span style="margin-left:.9px;letter-spacing:0.92px;margin-right:-0.92px">Activist Filings</span></h2><span class="tag"><span style="margin-left:.9px;letter-spacing:0.52px;margin-right:-0.52px">ACTIVIST</span></span></div>
<div class="st"><span style="left:31.2px"><b>85</b><span style="letter-spacing:-0.27px;margin-right:0.27px">Total</span></span><span style="left:103.0px"><b>1</b><span style="letter-spacing:-0.34px;margin-right:0.34px">Today</span></span><span style="left:174.2px"><b>0</b><span style="letter-spacing:-0.40px;margin-right:0.40px">New Positions</span></span></div>
</header>
<div class="ls">
<div class="rw"><span class="nw">NEW</span><div class="inf"><div class="nm"><span style="letter-spacing:0.14px;margin-right:-0.14px">GeoPark Ltd (GPRK)</span></div><div class="mt"><span><svg width="11" height="11" viewBox="0 0 24 24" fill="none" stroke="currentColor" stroke-width="2" stroke-linecap="round" stroke-linejoin="round"><rect x="3" y="4" width="18" height="18" rx="2" ry="2"/><line x1="16" y1="2" x2="16" y2="6"/><line x1="8" y1="2" x2="8" y2="6"/><line x1="3" y1="10" x2="21" y2="10"/></svg><span class="d" style="transform:scaleX(1.161);margin-right:10.66px">2026-04-09</span></span><span><svg width="11" height="11" viewBox="0 0 24 24" fill="none" stroke="currentColor" stroke-width="2" stroke-linecap="round" stroke-linejoin="round"><path d="M20 21v-2a4 4 0 0 0-4-4H8a4 4 0 0 0-4 4v2"/><circle cx="12" cy="7" r="4"/></svg><span style="letter-spacing:0.24px;margin-right:-0.24px">Parex Resources Inc.</span></span><span><span style="margin-left:.9px;letter-spacing:0.87px;margin-right:-0.87px">Amend 4</span></span></div></div><div class="v v2"><b>9.4%</b><i><span style="letter-spacing:0.09px;margin-right:-0.09px">OWNED</span></i></div><span class="ar">&rarr;</span></div>
<div class="rw tall"><span class="nw">NEW</span><div class="inf"><div class="nm"><span style="letter-spacing:-0.41px;margin-right:0.41px">NUVEEN NEW JERSEY QUALITY MUNICIPA...</span></div><div class="mt"><span><svg width="11" height="11" viewBox="0 0 24 24" fill="none" stroke="currentColor" stroke-width="2" stroke-linecap="round" stroke-linejoin="round"><rect x="3" y="4" width="18" height="18" rx="2" ry="2"/><line x1="16" y1="2" x2="16" y2="6"/><line x1="8" y1="2" x2="8" y2="6"/><line x1="3" y1="10" x2="21" y2="10"/></svg><span class="d" style="transform:scaleX(1.151);margin-right:10.06px">2026-04-08</span></span></div><div class="mt m2"><span><svg width="11" height="11" viewBox="0 0 24 24" fill="none" stroke="currentColor" stroke-width="2" stroke-linecap="round" stroke-linejoin="round"><path d="M20 21v-2a4 4 0 0 0-4-4H8a4 4 0 0 0-4 4v2"/><circle cx="12" cy="7" r="4"/></svg><span style="letter-spacing:-0.10px;margin-right:0.10px">TORONTO DOMINION INVESTMENTS LLC</span></span></div><div class="mt m2"><span><span style="margin-left:.9px;letter-spacing:0.23px;margin-right:-0.23px">Amend 1</span></span></div></div><div class="v v2"><b>0.0%</b><i><span style="letter-spacing:0.09px;margin-right:-0.09px">OWNED</span></i></div><span class="ar">&rarr;</span></div>
<div class="rw tall"><span class="nw">NEW</span><div class="inf"><div class="nm"><span style="letter-spacing:0.29px;margin-right:-0.29px">Equity Bancshares, Inc. (EQBK)</span></div><div class="mt"><span><svg width="11" height="11" viewBox="0 0 24 24" fill="none" stroke="currentColor" stroke-width="2" stroke-linecap="round" stroke-linejoin="round"><rect x="3" y="4" width="18" height="18" rx="2" ry="2"/><line x1="16" y1="2" x2="16" y2="6"/><line x1="8" y1="2" x2="8" y2="6"/><line x1="3" y1="10" x2="21" y2="10"/></svg><span class="d" style="transform:scaleX(1.151);margin-right:10.06px">2026-04-08</span></span><span><svg width="11" height="11" viewBox="0 0 24 24" fill="none" stroke="currentColor" stroke-width="2" stroke-linecap="round" stroke-linejoin="round"><path d="M20 21v-2a4 4 0 0 0-4-4H8a4 4 0 0 0-4 4v2"/><circle cx="12" cy="7" r="4"/></svg><span style="letter-spacing:0.22px;margin-right:-0.22px">Patriot Financial Partners III, L.P.</span></span></div><div class="mt m2"><span><span style="margin-left:.9px;letter-spacing:0.73px;margin-right:-0.73px">Amend 2</span></span></div></div><div class="v v2"><b>4.8%</b><i><span style="letter-spacing:0.09px;margin-right:-0.09px">OWNED</span></i></div><span class="ar">&rarr;</span></div>
<div class="rw tall"><span class="nw">NEW</span><div class="inf"><div class="nm"><span style="letter-spacing:-0.20px;margin-right:0.20px">SWK HOLDINGS CORPORATION (SWKH)</span></div><div class="mt"><span><svg width="11" height="11" viewBox="0 0 24 24" fill="none" stroke="currentColor" stroke-width="2" stroke-linecap="round" stroke-linejoin="round"><rect x="3" y="4" width="18" height="18" rx="2" ry="2"/><line x1="16" y1="2" x2="16" y2="6"/><line x1="8" y1="2" x2="8" y2="6"/><line x1="3" y1="10" x2="21" y2="10"/></svg><span class="d" style="transform:scaleX(1.151);margin-right:10.06px">2026-04-08</span></span></div><div class="mt m2"><span><svg width="11" height="11" viewBox="0 0 24 24" fill="none" stroke="currentColor" stroke-width="2" stroke-linecap="round" stroke-linejoin="round"><path d="M20 21v-2a4 4 0 0 0-4-4H8a4 4 0 0 0-4 4v2"/><circle cx="12" cy="7" r="4"/></svg><span style="letter-spacing:0.48px;margin-right:-0.48px">Double Black Diamond Offshore Ltd.</span></span><span><span style="margin-left:.9px;letter-spacing:0.15px;margin-right:-0.15px">Amend 17</span></span></div></div><div class="v v2"><b>0.0%</b><i><span style="letter-spacing:0.09px;margin-right:-0.09px">OWNED</span></i></div><span class="ar">&rarr;</span></div>
<div class="rw tall"><span class="nw">NEW</span><div class="inf"><div class="nm"><span style="letter-spacing:0.39px;margin-right:-0.39px">Brookfield Business Corp (BBU)</span></div><div class="mt"><span><svg width="11" height="11" viewBox="0 0 24 24" fill="none" stroke="currentColor" stroke-width="2" stroke-linecap="round" stroke-linejoin="round"><rect x="3" y="4" width="18" height="18" rx="2" ry="2"/><line x1="16" y1="2" x2="16" y2="6"/><line x1="8" y1="2" x2="8" y2="6"/><line x1="3" y1="10" x2="21" y2="10"/></svg><span class="d" style="transform:scaleX(1.151);margin-right:10.06px">2026-04-08</span></span><span><svg width="11" height="11" viewBox="0 0 24 24" fill="none" stroke="currentColor" stroke-width="2" stroke-linecap="round" stroke-linejoin="round"><path d="M20 21v-2a4 4 0 0 0-4-4H8a4 4 0 0 0-4 4v2"/><circle cx="12" cy="7" r="4"/></svg><span style="letter-spacing:-0.15px;margin-right:0.15px">BROOKFIELD CORPORATION</span></span></div><div class="mt m2"><span><span style="margin-left:.9px;letter-spacing:0.73px;margin-right:-0.73px">Amend 2</span></span></div></div><div class="v v2"><b>69.0%</b><i><span style="letter-spacing:0.09px;margin-right:-0.09px">OWNED</span></i></div><span class="ar">&rarr;</span></div>
<div class="rw"><span class="nw">NEW</span><div class="inf"><div class="nm"><span style="letter-spacing:0.33px;margin-right:-0.33px">Satellogic Inc. (SATL)</span></div><div class="mt"><span><svg width="11" height="11" viewBox="0 0 24 24" fill="none" stroke="currentColor" stroke-width="2" stroke-linecap="round" stroke-linejoin="round"><rect x="3" y="4" width="18" height="18" rx="2" ry="2"/><line x1="16" y1="2" x2="16" y2="6"/><line x1="8" y1="2" x2="8" y2="6"/><line x1="3" y1="10" x2="21" y2="10"/></svg><span class="d" style="transform:scaleX(1.151);margin-right:10.06px">2026-04-08</span></span><span><svg width="11" height="11" viewBox="0 0 24 24" fill="none" stroke="currentColor" stroke-width="2" stroke-linecap="round" stroke-linejoin="round"><path d="M20 21v-2a4 4 0 0 0-4-4H8a4 4 0 0 0-4 4v2"/><circle cx="12" cy="7" r="4"/></svg><span style="letter-spacing:0.29px;margin-right:-0.29px">Cantor Fitzgerald, L.P.</span></span><span><span style="margin-left:.9px;letter-spacing:0.83px;margin-right:-0.83px">Amend 6</span></span></div></div><div class="v v2"><b>7.0%</b><i><span style="letter-spacing:0.09px;margin-right:-0.09px">OWNED</span></i></div><span class="ar">&rarr;</span></div>
<div class="rw"><span class="nw">NEW</span><div class="inf"><div class="nm"><span style="letter-spacing:0.38px;margin-right:-0.38px">Dyne Therapeutics, Inc. (DYN)</span></div><div class="mt"><span><svg width="11" height="11" viewBox="0 0 24 24" fill="none" stroke="currentColor" stroke-width="2" stroke-linecap="round" stroke-linejoin="round"><rect x="3" y="4" width="18" height="18" rx="2" ry="2"/><line x1="16" y1="2" x2="16" y2="6"/><line x1="8" y1="2" x2="8" y2="6"/><line x1="3" y1="10" x2="21" y2="10"/></svg><span class="d" style="transform:scaleX(1.151);margin-right:10.06px">2026-04-08</span></span><span><svg width="11" height="11" viewBox="0 0 24 24" fill="none" stroke="currentColor" stroke-width="2" stroke-linecap="round" stroke-linejoin="round"><path d="M20 21v-2a4 4 0 0 0-4-4H8a4 4 0 0 0-4 4v2"/><circle cx="12" cy="7" r="4"/></svg><span style="margin-left:.9px;letter-spacing:0.19px;margin-right:-0.19px">Atlas Venture Fund XI, L.P.</span></span><span><span style="margin-left:.9px;letter-spacing:0.80px;margin-right:-0.80px">Amend 3</span></span></div></div><div class="v v2"><b>5.1%</b><i><span style="letter-spacing:0.09px;margin-right:-0.09px">OWNED</span></i></div><span class="ar">&rarr;</span></div>
</div>
</section>
</div>
</main>
</body>
</html>
